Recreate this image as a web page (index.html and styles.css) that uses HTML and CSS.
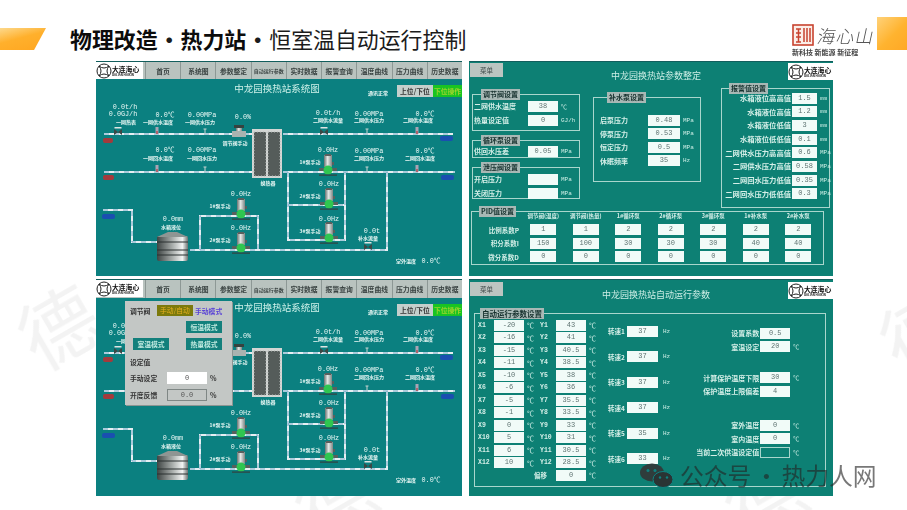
FILE: index.html
```html
<!DOCTYPE html>
<html lang="zh">
<head>
  <meta charset="UTF-8">
  <title>物理改造 · 热力站 · 恒室温自动运行控制</title>
  <meta name="viewport" content="width=device-width, initial-scale=1.0">
  <link rel="stylesheet" href="styles.css">
</head>
<body>

<svg class="sprite" aria-hidden="true">
  <defs>
    <linearGradient id="metal" x1="0" x2="1" y1="0" y2="0">
      <stop offset="0" stop-color="#6b7371"/>
      <stop offset=".45" stop-color="#e4e8e6"/>
      <stop offset="1" stop-color="#7d8583"/>
    </linearGradient>
    <linearGradient id="tankFill" x1="0" x2="1" y1="0" y2="0">
      <stop offset="0" stop-color="#3e4443"/>
      <stop offset=".5" stop-color="#a9aeac"/>
      <stop offset=".82" stop-color="#f2f4f3"/>
      <stop offset="1" stop-color="#6d7372"/>
    </linearGradient>
    <symbol id="haixin" viewBox="-8 -8 16 16">
      <circle r="7" fill="none" stroke="#222" stroke-width="1"/>
      <path d="M-5-5Q0-1 5-5M-5 5Q0 1 5 5M-5-5Q-1 0-5 5M5-5Q1 0 5 5" fill="none" stroke="#222" stroke-width="1"/>
    </symbol>
    <g id="pump">
      <rect x="-4" y="-15" width="8" height="12" fill="url(#metal)"/>
      <rect x="-3" y="-16" width="6" height="2" fill="#59605e"/>
      <rect x="4" y="-8" width="2" height="3" fill="#59605e"/>
      <rect x="-9" y="-2" width="18" height="3" fill="#58605d"/>
      <circle r="4.5" fill="#2fc650"/>
      <rect x="-9" y="4.5" width="18" height="1.2" fill="#33413f"/>
    </g>
    <g id="temp">
      <rect x="-1.5" y="-7" width="3" height="7" fill="#a9a4b4"/>
      <rect x="-.7" y="-3" width="1.4" height="3" fill="#b3484e"/>
    </g>
    <g id="press">
      <path d="M0-5V0M-1.5-5H1.5" stroke="#c8d4d2" stroke-width="1" fill="none"/>
    </g>
    <g id="flow">
      <path d="M-4-3L4 3V-3L-4 3Z" fill="#3d4745"/>
      <rect x="-3.5" y="-5" width="7" height="1.5" fill="#dfe5e3"/>
    </g>
    <path id="hot" d="M104 133H252M104 171H252"/>
    <path id="cold" d="M283 133H453M283 171H455"/>
    <path id="loop" d="M288 171V239H345V171M288 204H345M387 171V249H190M200 249V215H258V249M103 209H132V241H157"/>
  </defs>
</svg>

<div class="slide">
  <div class="mark mark-left">德</div>
  <div class="mark mark-low">德</div>
  <div class="mark mark-bottom">德</div>
  <div class="mark mark-right">德</div>

  <header class="top">
    <div class="accent"></div>
    <h1 class="title"><b>物理改造</b><span class="dot">•</span><b>热力站</b><span class="dot">•</span>恒室温自动运行控制</h1>
    <div class="brand">
      <div class="brand-row">
        <svg class="seal" viewBox="0 0 22 22">
          <rect x="1" y="1" width="20" height="20" fill="#fbeee8" stroke="#c8432f" stroke-width="1.6"/>
          <path d="M4 5H9M4 9H9M4 13H9M6.5 5V18M4 18H9M12 4V18M15 4V18M18 4V18" stroke="#c8432f" stroke-width="1.5" fill="none"/>
        </svg>
        <span class="brand-name">海心山</span>
      </div>
      <div class="brand-tag">新科技 新能源 新征程</div>
    </div>
    <div class="corner"></div>
  </header>

  <main class="boards">

    <section class="hmi">
      <nav class="hmi-nav">
        <div class="mini-logo"><svg><use href="#haixin"/></svg><div>大连海心<small>DALIAN HAIXIN</small></div></div>
        <span>首页</span><span>系统图</span><span>参数整定</span><span class="tiny">自动运行参数</span><span>实时数据</span><span>报警查询</span><span>温度曲线</span><span>压力曲线</span><span>历史数据</span>
      </nav>
      <svg id="diagram" class="diagram" viewBox="96 78 366 198">
        <g class="pipe">
          <use href="#hot"/><use href="#cold"/><use href="#loop"/>
        </g>
        <g class="pipe-dash">
          <use href="#hot"/><use href="#cold"/><use href="#loop"/>
        </g>
        <rect x="103" y="137" width="10" height="5" rx="2" fill="#a33a3c"/>
        <rect x="103" y="174" width="11" height="5" rx="2" fill="#a33a3c"/>
        <rect x="440" y="135" width="13" height="5" rx="2" fill="#1a4fb0"/>
        <rect x="441" y="174" width="13" height="5" rx="2" fill="#1a4fb0"/>
        <rect x="102" y="213" width="13" height="5" rx="2" fill="#1a4fb0"/>

        <rect x="252" y="128" width="30" height="49" fill="#d3d6d4"/>
        <rect x="254" y="131" width="12" height="44" class="plate"/>
        <rect x="268" y="131" width="12" height="44" class="plate"/>

        <rect x="234" y="124" width="10" height="3" fill="#36423f"/>
        <rect x="236" y="127" width="6" height="8" fill="url(#metal)"/>
        <rect x="232" y="130" width="14" height="6" fill="#aab3b0"/>

        <use href="#flow" x="118" y="131"/><use href="#flow" x="324" y="131"/><use href="#flow" x="368" y="246"/>
        <use href="#temp" x="157" y="133"/><use href="#temp" x="417" y="133"/><use href="#temp" x="157" y="171"/><use href="#temp" x="417" y="171"/>
        <use href="#press" x="205" y="133"/><use href="#press" x="367" y="133"/><use href="#press" x="205" y="171"/><use href="#press" x="367" y="171"/>

        <use href="#pump" x="328" y="169"/><use href="#pump" x="329" y="203"/><use href="#pump" x="329" y="237"/>
        <use href="#pump" x="241" y="213"/><use href="#pump" x="241" y="247"/>

        <rect x="157" y="235" width="31" height="25" rx="2" fill="url(#tankFill)"/>
        <path d="M157 236L168 231H177L188 236Z" fill="#8f9593"/>
        <path d="M157 241H188M157 249H188M157 254H188" stroke="#2b3130" stroke-width="1"/>

        <text x="277" y="91" class="head">中龙园换热站系统图</text>
        <text x="378" y="94" class="small">通讯正常</text>

        <text x="125" y="108" class="val">0.0t/h</text>
        <text x="123" y="115" class="val">0.0GJ/h</text>
        <text x="126" y="122.500" class="small">一网热表</text>
        <text x="165" y="116" class="val">0.0℃</text>
        <text x="158" y="122.500" class="small">一网供水温度</text>
        <text x="202" y="116" class="val">0.00MPa</text>
        <text x="200" y="122.500" class="small">一网供水压力</text>
        <text x="243" y="118" class="val">0.0%</text>
        <text x="235" y="144" class="small">调节阀手动</text>
        <text x="328" y="114" class="val">0.0t/h</text>
        <text x="328" y="121" class="small">二网供水流量</text>
        <text x="369" y="115" class="val">0.00MPa</text>
        <text x="369" y="121" class="small">二网供水压力</text>
        <text x="425" y="115" class="val">0.0℃</text>
        <text x="418" y="121" class="small">二网供水温度</text>

        <text x="165" y="151" class="val">0.0℃</text>
        <text x="158" y="159" class="small">一网回水温度</text>
        <text x="202" y="151" class="val">0.00MPa</text>
        <text x="202" y="159" class="small">一网回水压力</text>
        <text x="328" y="151" class="val">0.0Hz</text>
        <text x="310" y="163" class="small">1#泵手动</text>
        <text x="369" y="152" class="val">0.00MPa</text>
        <text x="369" y="159" class="small">二网回水压力</text>
        <text x="425" y="152" class="val">0.0℃</text>
        <text x="420" y="159" class="small">二网回水温度</text>

        <text x="268" y="184" class="small">换热器</text>
        <text x="329" y="185" class="val">0.0Hz</text>
        <text x="310" y="197" class="small">2#泵手动</text>
        <text x="329" y="220" class="val">0.0Hz</text>
        <text x="310" y="232" class="small">3#泵手动</text>
        <text x="241" y="195" class="val">0.0Hz</text>
        <text x="220" y="207" class="small">1#泵手动</text>
        <text x="241" y="229" class="val">0.0Hz</text>
        <text x="220" y="241" class="small">2#泵手动</text>
        <text x="173" y="220" class="val">0.0mm</text>
        <text x="171" y="228" class="small">水箱液位</text>
        <text x="372" y="232" class="val">0.0t</text>
        <text x="368" y="239" class="small">补水流量</text>
        <text x="406" y="262" class="small">室外温度</text>
        <text x="431" y="262" class="val">0.0℃</text>
      </svg>
      <div class="mode-btns"><span class="link-btn">上位/下位</span><span class="lower-btn">下位操作</span></div>
    </section>

    <section class="hmi params">
      <div class="param-head">
        <span class="menu">菜单</span>
        <span class="param-title">中龙园换热站参数整定</span>
        <div class="mini-logo"><svg><use href="#haixin"/></svg><div>大连海心<small>DALIAN HAIXIN</small></div></div>
      </div>
      <div class="param-upper">
        <div class="param-col first">
          <div class="group g-valve">
            <span class="legend">调节阀设置</span>
            <div class="field"><label>二网供水温度</label><span class="num">38</span><em>℃</em></div>
            <div class="field"><label>热量设定值</label><span class="num">0</span><em>GJ/h</em></div>
          </div>
          <div class="group g-loop">
            <span class="legend">循环泵设置</span>
            <div class="field"><label>供回水压差</label><span class="num">0.05</span><em>MPa</em></div>
          </div>
          <div class="group g-relief">
            <span class="legend">泄压阀设置</span>
            <div class="field"><label>开启压力</label><span class="num"></span><em>MPa</em></div>
            <div class="field"><label>关闭压力</label><span class="num"></span><em>MPa</em></div>
          </div>
        </div>
        <div class="param-col second">
          <div class="group refill">
            <span class="legend">补水泵设置</span>
            <div class="field"><label>启泵压力</label><span class="num">0.48</span><em>MPa</em></div>
            <div class="field"><label>停泵压力</label><span class="num">0.53</span><em>MPa</em></div>
            <div class="field"><label>恒定压力</label><span class="num">0.5</span><em>MPa</em></div>
            <div class="field"><label>休眠频率</label><span class="num">35</span><em>Hz</em></div>
          </div>
        </div>
        <div class="param-col third">
          <div class="group alarm">
            <span class="legend">报警值设置</span>
            <div class="field"><label>水箱液位高高值</label><span class="num">1.5</span><em>mm</em></div>
            <div class="field"><label>水箱液位高值</label><span class="num">1.2</span><em>mm</em></div>
            <div class="field"><label>水箱液位低值</label><span class="num">3</span><em>mm</em></div>
            <div class="field"><label>水箱液位低低值</label><span class="num">0.1</span><em>mm</em></div>
            <div class="field"><label>二网供水压力高高值</label><span class="num">0.6</span><em>MPa</em></div>
            <div class="field"><label>二网供水压力高值</label><span class="num">0.58</span><em>MPa</em></div>
            <div class="field"><label>二网回水压力低值</label><span class="num">0.35</span><em>MPa</em></div>
            <div class="field"><label>二网回水压力低低值</label><span class="num">0.3</span><em>MPa</em></div>
          </div>
        </div>
      </div>
      <div class="group pid">
        <span class="legend">PID值设置</span>
        <div class="pid-grid">
          <i></i><b>调节阀(温度)</b><b>调节阀(热量)</b><b>1#循环泵</b><b>2#循环泵</b><b>3#循环泵</b><b>1#补水泵</b><b>2#补水泵</b>
          <label>比例系数P</label><span class="num">1</span><span class="num">1</span><span class="num">2</span><span class="num">2</span><span class="num">2</span><span class="num">2</span><span class="num">2</span>
          <label>积分系数I</label><span class="num">150</span><span class="num">100</span><span class="num">30</span><span class="num">30</span><span class="num">30</span><span class="num">40</span><span class="num">40</span>
          <label>微分系数D</label><span class="num">0</span><span class="num">0</span><span class="num">0</span><span class="num">0</span><span class="num">0</span><span class="num">0</span><span class="num">0</span>
        </div>
      </div>
    </section>

    <section class="hmi hmi-tall">
      <nav class="hmi-nav">
        <div class="mini-logo"><svg><use href="#haixin"/></svg><div>大连海心<small>DALIAN HAIXIN</small></div></div>
        <span>首页</span><span>系统图</span><span>参数整定</span><span class="tiny">自动运行参数</span><span>实时数据</span><span>报警查询</span><span>温度曲线</span><span>压力曲线</span><span>历史数据</span>
      </nav>
      <svg id="diagramCopy" class="diagram"></svg>
      <div class="mode-btns"><span class="link-btn">上位/下位</span><span class="lower-btn">下位操作</span></div>

      <div class="valve-pop">
        <div class="pop-row">
          <strong>调节阀</strong><span class="pop-auto">手动/自动</span><span class="pop-mode">手动模式</span>
        </div>
        <div class="pop-modes">
          <span></span><span class="pop-btn">恒温模式</span>
          <span class="pop-btn">室温模式</span><span class="pop-btn">热量模式</span>
        </div>
        <strong class="pop-set">设定值</strong>
        <div class="pop-field"><label>手动设定</label><span class="pop-in">0</span><em>%</em></div>
        <div class="pop-field"><label>开度反馈</label><span class="pop-in sunk">0.0</span><em>%</em></div>
      </div>
    </section>

    <section class="hmi params auto">
      <div class="param-head">
        <span class="menu">菜单</span>
        <span class="param-title">中龙园换热站自动运行参数</span>
        <div class="mini-logo"><svg><use href="#haixin"/></svg><div>大连海心<small>DALIAN HAIXIN</small></div></div>
      </div>
      <div class="group auto-box">
        <span class="legend">自动运行参数设置</span>
        <div class="auto-cols">
          <div class="curve">
            <label>X1</label><span class="num">-20</span><em>℃</em><label>Y1</label><span class="num">43</span><em>℃</em>
            <label>X2</label><span class="num">-16</span><em>℃</em><label>Y2</label><span class="num">41</span><em>℃</em>
            <label>X3</label><span class="num">-15</span><em>℃</em><label>Y3</label><span class="num">40.5</span><em>℃</em>
            <label>X4</label><span class="num">-11</span><em>℃</em><label>Y4</label><span class="num">38.5</span><em>℃</em>
            <label>X5</label><span class="num">-10</span><em>℃</em><label>Y5</label><span class="num">38</span><em>℃</em>
            <label>X6</label><span class="num">-6</span><em>℃</em><label>Y6</label><span class="num">36</span><em>℃</em>
            <label>X7</label><span class="num">-5</span><em>℃</em><label>Y7</label><span class="num">35.5</span><em>℃</em>
            <label>X8</label><span class="num">-1</span><em>℃</em><label>Y8</label><span class="num">33.5</span><em>℃</em>
            <label>X9</label><span class="num">0</span><em>℃</em><label>Y9</label><span class="num">33</span><em>℃</em>
            <label>X10</label><span class="num">5</span><em>℃</em><label>Y10</label><span class="num">31</span><em>℃</em>
            <label>X11</label><span class="num">6</span><em>℃</em><label>Y11</label><span class="num">30.5</span><em>℃</em>
            <label>X12</label><span class="num">10</span><em>℃</em><label>Y12</label><span class="num">28.5</span><em>℃</em>
            <i></i><i></i><i></i><label class="cn">偏移</label><span class="num">0</span><em>℃</em>
          </div>
          <div class="speeds">
            <div class="field"><label>转速1</label><span class="num">37</span><em>Hz</em></div>
            <div class="field"><label>转速2</label><span class="num">37</span><em>Hz</em></div>
            <div class="field"><label>转速3</label><span class="num">37</span><em>Hz</em></div>
            <div class="field"><label>转速4</label><span class="num">37</span><em>Hz</em></div>
            <div class="field"><label>转速5</label><span class="num">35</span><em>Hz</em></div>
            <div class="field"><label>转速6</label><span class="num">33</span><em>Hz</em></div>
          </div>
          <div class="room">
            <div class="field"><label>设置系数</label><span class="num">0.5</span><em></em></div>
            <div class="field"><label>室温设定</label><span class="num">20</span><em>℃</em></div>
            <div class="field far"><label>计算保护温度下限</label><span class="num">30</span><em>℃</em></div>
            <div class="field"><label>保护温度上限偏差</label><span class="num">4</span><em></em></div>
            <div class="field farther"><label>室外温度</label><span class="num">0</span><em>℃</em></div>
            <div class="field"><label>室内温度</label><span class="num">0</span><em>℃</em></div>
            <div class="field"><label>当前二次供温设定值</label><span class="num dark"></span><em>℃</em></div>
          </div>
        </div>
      </div>
    </section>
  </main>

  <div class="wechat">
    <svg class="wechat-icon" viewBox="0 0 33 24">
      <ellipse cx="12" cy="9" rx="12" ry="9" fill="#2f3d3c"/>
      <ellipse cx="23" cy="16" rx="10" ry="8" fill="#2a3434" stroke="#0f8280" stroke-width="1"/>
      <circle cx="8" cy="7" r="1.5" fill="#0f8280"/><circle cx="15" cy="7" r="1.5" fill="#0f8280"/>
      <circle cx="20" cy="14" r="1.2" fill="#0f8280"/><circle cx="27" cy="14" r="1.2" fill="#0f8280"/>
    </svg>
    <span>公众号</span><span class="wechat-dot">·</span><span>热力人网</span>
  </div>
</div>

<script src="script.js"></script>
</body>
</html>
```

FILE: styles.css
```css
* {
  box-sizing: border-box;
}

body {
  margin: 0;
  background: #fff;
  font-family: "Noto Sans CJK SC", "Liberation Sans", sans-serif;
  color: #111;
}

.sprite {
  position: absolute;
  width: 0;
  height: 0;
}

.slide {
  position: relative;
  width: 907px;
  height: 510px;
  overflow: hidden;
  background: #fff;
}

.mark {
  position: absolute;
  font-size: 78px;
  line-height: 1;
  color: #f3f3f3;
  transform: rotate(-30deg);
  filter: blur(.6px);
}

.mark-left { left: 18px; top: 285px; }
.mark-low { left: 295px; top: 458px; }
.mark-bottom { left: 725px; top: 458px; }
.mark-right { left: 880px; top: 290px; }

/* header */
.top {
  position: relative;
  display: flex;
  align-items: flex-start;
  height: 61px;
  padding-top: 26px;
}

.accent {
  width: 46px;
  height: 22px;
  margin-top: 2px;
  background: linear-gradient(165deg, #fdd98c, #ffb02c 45%, #ffa620);
  clip-path: polygon(0 0, 100% 0, 74% 100%, 0 100%);
  filter: blur(.5px);
}

.title {
  margin: 0 0 0 24px;
  font-size: 21.9px;
  line-height: 25px;
  font-weight: 400;
  white-space: nowrap;
  color: #1b1b1b;
}

.title b {
  font-weight: 700;
  color: #0c0c0c;
}

.dot {
  display: inline-block;
  width: 23px;
  text-align: center;
  font-weight: 700;
}

.brand {
  margin: -2px 2px 0 auto;
  width: 83px;
  filter: blur(.4px);
}

.brand-row {
  display: flex;
  align-items: center;
  gap: 4px;
}

.seal {
  width: 22px;
  height: 22px;
  flex: none;
}

.brand-name {
  font-size: 18px;
  line-height: 22px;
  font-weight: 300;
  letter-spacing: 1px;
  color: #555;
  transform: skewX(-12deg);
}

.brand-tag {
  margin-top: 2px;
  font-size: 7px;
  line-height: 9px;
  font-weight: 700;
  white-space: nowrap;
  color: #444;
}

.corner {
  width: 30px;
  height: 33px;
  margin-top: -9px;
  background: linear-gradient(135deg, #ffd27a, #ffb32f 55%, #ffa825);
}

/* 4 screenshots */
.boards {
  position: relative;
  display: grid;
  grid-template-columns: 366px 364px;
  grid-template-rows: 215px 217px;
  gap: 3px 7px;
  margin-left: 96px;
}

.hmi {
  position: relative;
  overflow: hidden;
  background: #0b8080;
  border-top: 1px solid #125e5d;
  filter: blur(.3px);
}

.hmi-nav {
  display: flex;
  height: 17px;
  background: #b9c3bf;
  font-size: 6.8px;
  font-weight: 700;
  color: #3a4342;
}

.hmi-tall .hmi-nav {
  height: 18px;
}

.hmi-nav > span {
  flex: 1;
  display: flex;
  align-items: center;
  justify-content: center;
  border-left: 1px solid #8d9895;
  white-space: nowrap;
}

.hmi-nav > .tiny {
  font-size: 5px;
}

.mini-logo {
  display: flex;
  align-items: center;
  width: 47px;
  height: 17px;
  flex: none;
  margin-right: 2px;
  background: #fff;
  font-size: 6.8px;
  line-height: 8px;
  font-weight: 700;
  color: #111;
}

.mini-logo svg {
  width: 16px;
  height: 16px;
  flex: none;
}

.mini-logo small {
  display: block;
  font-size: 3px;
  line-height: 4px;
  white-space: nowrap;
}

.diagram {
  display: block;
  width: 366px;
  height: 198px;
}

.pipe use {
  fill: none;
  stroke: #e6eef2;
  stroke-width: 2;
}

.pipe-dash use {
  fill: none;
  stroke: #6fa7c4;
  stroke-width: 1;
  stroke-dasharray: 5 5;
}

.plate {
  fill: #555c5a;
  stroke: #b4b9b7;
  stroke-width: 1;
  stroke-dasharray: 1 2;
}

.diagram text {
  fill: #eaf8f5;
  text-anchor: middle;
  font-family: "Liberation Mono", "Noto Sans CJK SC", monospace;
}

.diagram .head {
  font-family: "Noto Sans CJK SC", sans-serif;
  font-size: 9.5px;
  fill: #cff2ea;
}

.diagram .val {
  font-size: 6.8px;
}

.diagram .small {
  font-family: "Noto Sans CJK SC", sans-serif;
  font-size: 5px;
  font-weight: 700;
}

.mode-btns {
  position: absolute;
  top: 23px;
  right: 0;
  display: flex;
  font-size: 6.8px;
  line-height: 12px;
  font-weight: 700;
  text-align: center;
  white-space: nowrap;
}

.hmi-tall .mode-btns {
  top: 24px;
}

.link-btn {
  width: 36px;
  background: #c5cfcc;
  color: #333;
}

.lower-btn {
  width: 29px;
  background: #19c422;
  color: #9fd32c;
}

/* popup on the third board */
.valve-pop {
  position: absolute;
  left: 29px;
  top: 21px;
  width: 107px;
  height: 104px;
  padding: 4px 0 0 5px;
  background: #c3c7c5;
  box-shadow: 1px 1px 0 #8d9593;
  font-size: 6.8px;
  color: #333;
  white-space: nowrap;
}

.pop-row {
  display: flex;
  align-items: center;
  height: 11px;
}

.pop-row strong {
  width: 27px;
}

.pop-auto {
  width: 36px;
  height: 11px;
  line-height: 11px;
  text-align: center;
  background: #7c7a0c;
  color: #e8b020;
}

.pop-mode {
  margin-left: 2px;
  font-weight: 700;
  color: #5a44d6;
}

.pop-modes {
  display: grid;
  grid-template-columns: 36px 36px;
  justify-content: start;
  gap: 5px 17px;
  margin: 5px 0 0 3px;
}

.pop-btn {
  height: 12px;
  line-height: 12px;
  text-align: center;
  background: #13807c;
  color: #bfe8df;
  font-weight: 700;
}

.pop-set {
  display: block;
  margin-top: 7px;
  line-height: 11px;
}

.pop-field {
  display: flex;
  align-items: center;
  margin-top: 4px;
  height: 12px;
}

.pop-field + .pop-field {
  margin-top: 5px;
}

.pop-field label {
  width: 37px;
  font-weight: 700;
}

.pop-field em {
  margin-left: 3px;
  font-style: normal;
  font-weight: 700;
}

.pop-in {
  width: 40px;
  height: 12px;
  line-height: 12px;
  text-align: center;
  background: #fff;
  font-family: "Liberation Mono", monospace;
  font-size: 7px;
  color: #555;
}

.pop-in.sunk {
  background: #c3c7c5;
  border: 1px solid #7f8785;
  line-height: 10px;
}

/* parameter boards */
.params {
  background: #0d8074;
  font-size: 7px;
  color: #d8f0ea;
}

.params label {
  font-weight: 700;
  color: #d5efe8;
}

.param-head {
  display: grid;
  grid-template-columns: 1fr auto 1fr;
  height: 23px;
  padding: 1px 0 0 1px;
}

.param-head .mini-logo {
  justify-self: end;
  margin: 0;
  width: 45px;
}

.menu {
  width: 33px;
  height: 14px;
  line-height: 14px;
  text-align: center;
  background: #bcc5c1;
  color: #3d4847;
  font-size: 6.5px;
}

.param-title {
  align-self: start;
  margin: 6px 0 0 9px;
  font-size: 9px;
  line-height: 14px;
  color: #cdeee6;
}

.param-upper {
  display: flex;
  height: 123px;
  padding-left: 3px;
}

.param-col {
  width: 108px;
}

.first {
  display: flex;
  flex-direction: column;
  gap: 9px;
  margin: 9px 13px 0 0;
}

.second {
  margin: 12px 20px 0 0;
}

.third {
  width: 109px;
  margin-top: 3px;
}

.group {
  border: 1px solid #a9d6cd;
}

.legend {
  display: block;
  width: fit-content;
  height: 11px;
  margin: -6px 0 0 7px;
  padding: 0 2px;
  line-height: 11px;
  font-size: 7px;
  font-weight: 700;
  white-space: nowrap;
  background: #a8b8b5;
  color: #15302d;
}

.field {
  display: grid;
  grid-template-columns: 54px 30px auto;
  align-items: center;
  height: 12px;
  margin-top: 2px;
  white-space: nowrap;
}

.field em,
.curve em {
  padding-left: 3px;
  font-style: normal;
  font-size: 6px;
  font-family: "Liberation Mono", "Noto Sans CJK SC", monospace;
  color: #cdeee6;
}

.curve em {
  font-size: 7px;
}

.num {
  display: block;
  height: 11px;
  line-height: 11px;
  text-align: center;
  background: #f1fbf8;
  font-family: "Liberation Mono", monospace;
  font-size: 7px;
  color: #5f7472;
}

.num.dark {
  background: transparent;
  border: 1px solid #a9d6cd;
}

.g-valve {
  height: 37px;
}

.g-loop {
  height: 18px;
}

.g-relief {
  height: 32px;
}

.g-valve,
.g-loop,
.g-relief {
  padding-left: 1px;
}

.g-valve .field:first-of-type,
.g-relief .field:first-of-type {
  margin-top: 0;
}

.g-loop .legend {
  margin-bottom: -1px;
}

.g-loop .field {
  margin-top: 0;
}

.refill {
  height: 85px;
  padding-left: 6px;
}

.refill .field {
  grid-template-columns: 48px 32px auto;
  margin-top: 1.5px;
}

.refill .field:first-of-type {
  margin-top: 11px;
}

.alarm {
  height: 120px;
}

.alarm .legend {
  margin-bottom: -2px;
}

.alarm .field {
  grid-template-columns: 70px 25px auto;
  margin-top: 1.7px;
  font-size: 7.3px;
}

.alarm .field:first-of-type {
  margin-top: 0;
}

.alarm label {
  text-align: right;
  padding-right: 1px;
}

.pid {
  width: 353px;
  height: 54px;
  margin: 3px 0 0 2px;
}

.pid .legend {
  margin-bottom: -6.5px;
}

.pid-grid {
  display: grid;
  grid-template-columns: 50px repeat(7, 42.5px);
  grid-auto-rows: 11px;
  gap: 2.5px 0;
  justify-items: center;
  align-items: center;
}

.pid-grid b {
  font-size: 5.500px;
  white-space: nowrap;
}

.pid-grid label {
  justify-self: end;
  padding-right: 3px;
  font-size: 6.500px;
  white-space: nowrap;
}

.pid-grid .num {
  width: 26px;
}

/* auto run board */
.auto .param-head {
  height: 30px;
  padding-top: 2px;
}

.auto .param-title {
  margin-top: 6px;
}

.auto-box {
  width: 352px;
  height: 174px;
  margin: 3px 0 0 5px;
}

.auto .legend {
  font-size: 7.500px;
  margin-left: 5px;
}

.auto-cols {
  display: flex;
  padding-left: 3px;
}

.curve {
  display: grid;
  grid-template-columns: 16px 30px 16px 16px 30px 14px;
  grid-auto-rows: 10.500px;
  gap: 2px 0;
  align-items: center;
  width: 122px;
  margin-top: 1px;
  font-size: 6.500px;
}

.curve label {
  font-family: "Liberation Mono", monospace;
  white-space: nowrap;
}

.curve .cn {
  margin-left: -6px;
  font-family: "Noto Sans CJK SC", sans-serif;
}

.speeds {
  display: flex;
  flex-direction: column;
  gap: 14.500px;
  margin: 6.500px 0 0 8px;
}

.speeds .field {
  grid-template-columns: 19px 31px auto;
  height: 11px;
  margin: 0;
  font-size: 6.500px;
}

.speeds em {
  padding-left: 5px;
}

.room {
  margin: 8.500px 0 0 10px;
}

.room .field {
  grid-template-columns: 80px 30px auto;
  height: 11px;
  margin: 0 0 2.500px;
}

.room label {
  text-align: right;
  padding-right: 1px;
}

.room .far {
  margin-top: 20px;
}

.room .farther {
  margin-top: 23px;
}

/* wechat mark over the last board */
.wechat {
  position: absolute;
  left: 640px;
  top: 461px;
  display: flex;
  align-items: center;
  font-size: 23.800px;
  line-height: 28px;
  color: rgba(35, 35, 35, .62);
  white-space: nowrap;
  filter: blur(.3px);
}

.wechat-icon {
  width: 33px;
  height: 25px;
  margin: 1px 7px 0 0;
}

.wechat-dot {
  width: 30px;
  text-align: center;
}
```

FILE: script.js
```js
// both system screens show the same diagram
const source = document.getElementById("diagram");
const copy = source.cloneNode(true);
copy.id = "diagramCopy";
document.getElementById("diagramCopy").replaceWith(copy);
```
